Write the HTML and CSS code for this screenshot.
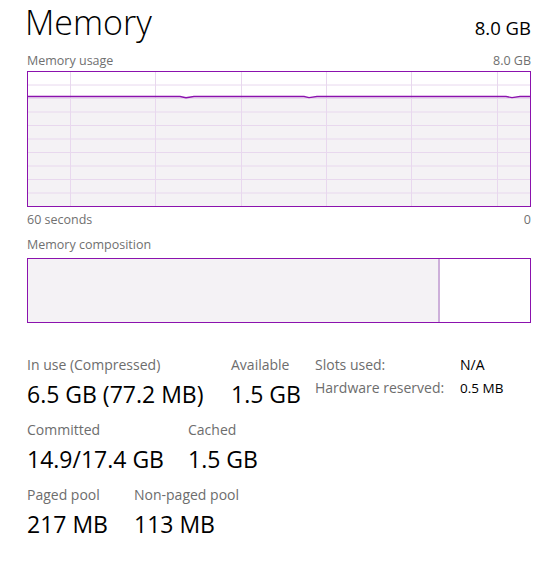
FILE: index.html
```html
<!DOCTYPE html>
<html lang="en">
<head>
    <meta charset="UTF-8">
    <meta name="viewport" content="width=device-width, initial-scale=1.0">
    <title>Memory</title>
    <link rel="stylesheet" href="styles.css">
</head>
<body>
    <div class="panel">
        <div class="header">
            <div class="title">Memory</div>
            <div class="total">8.0 GB</div>
        </div>
        <div class="caption-row caption-top">
            <span>Memory usage</span>
            <span>8.0 GB</span>
        </div>
        <div class="usage-graph">
            <svg width="502" height="134" viewBox="0 0 502 134">
                <rect x="0" y="25" width="502" height="109" fill="#f4f2f5"/>
                <g stroke="#e8d8ee" stroke-width="1">
                    <line x1="42.5" y1="0" x2="42.5" y2="134"/>
                    <line x1="127.5" y1="0" x2="127.5" y2="134"/>
                    <line x1="213.5" y1="0" x2="213.5" y2="134"/>
                    <line x1="298.5" y1="0" x2="298.5" y2="134"/>
                    <line x1="383.5" y1="0" x2="383.5" y2="134"/>
                    <line x1="469.5" y1="0" x2="469.5" y2="134"/>
                    <line x1="0" y1="13" x2="502" y2="13"/>
                    <line x1="0" y1="26.5" x2="502" y2="26.5"/>
                    <line x1="0" y1="40" x2="502" y2="40"/>
                    <line x1="0" y1="53.5" x2="502" y2="53.5"/>
                    <line x1="0" y1="67" x2="502" y2="67"/>
                    <line x1="0" y1="80.5" x2="502" y2="80.5"/>
                    <line x1="0" y1="94" x2="502" y2="94"/>
                    <line x1="0" y1="107.5" x2="502" y2="107.5"/>
                    <line x1="0" y1="121" x2="502" y2="121"/>
                </g>
                <polyline fill="none" stroke="#8b12ae" stroke-width="1.4"
                    points="0,24.5 152,24.5 158,25.8 166,24.5 276,24.5 281,25.6 289,24.5 478,24.5 484,25.6 492,24.5 502,24.5"/>
            </svg>
        </div>
        <div class="caption-row">
            <span>60 seconds</span>
            <span>0</span>
        </div>
        <div class="caption-row caption-comp">
            <span>Memory composition</span>
        </div>
        <div class="composition">
            <div class="comp-used"></div>
            <div class="comp-free"></div>
        </div>

        <div class="stats">
            <div class="stats-top">
                <div class="stat stat-inuse">
                    <div class="stat-label">In use (Compressed)</div>
                    <div class="stat-value">6.5 GB (77.2 MB)</div>
                </div>
                <div class="stat stat-available">
                    <div class="stat-label">Available</div>
                    <div class="stat-value">1.5 GB</div>
                </div>
                <div class="side">
                    <div class="side-label">Slots used:</div>
                    <div class="side-value">N/A</div>
                    <div class="side-label">Hardware reserved:</div>
                    <div class="side-value side-small">0.5 MB</div>
                </div>
            </div>
            <div class="stats-row">
                <div class="stat stat-committed">
                    <div class="stat-label">Committed</div>
                    <div class="stat-value">14.9/17.4 GB</div>
                </div>
                <div class="stat">
                    <div class="stat-label">Cached</div>
                    <div class="stat-value">1.5 GB</div>
                </div>
            </div>
            <div class="stats-row">
                <div class="stat stat-paged">
                    <div class="stat-label">Paged pool</div>
                    <div class="stat-value">217 MB</div>
                </div>
                <div class="stat">
                    <div class="stat-label">Non-paged pool</div>
                    <div class="stat-value">113 MB</div>
                </div>
            </div>
        </div>
    </div>
</body>
</html>
```

FILE: styles.css
```css
body {
    margin: 0;
    background-color: #ffffff;
    font-family: "Open Sans", "Noto Sans", sans-serif;
    color: #000000;
}
.panel {
    padding: 0 25px 0 27px;
    width: 504px;
}
.header {
    display: flex;
    justify-content: space-between;
    align-items: baseline;
    padding-top: 2px;
}
.title {
    font-size: 34px;
    font-weight: 300;
    line-height: 40px;
    margin-left: -2px;
}
.total {
    font-size: 18.5px;
    line-height: 24px;
}
.caption-row {
    display: flex;
    justify-content: space-between;
    font-size: 12.5px;
    line-height: 16px;
    color: #707070;
}
.caption-top {
    margin-top: 11px;
    margin-bottom: 2px;
}
.caption-comp {
    margin-top: 9px;
    margin-bottom: 5px;
}
.usage-graph {
    border: 1px solid #8b12ae;
    height: 134px;
    margin-bottom: 5px;
}
.usage-graph svg {
    display: block;
}
.composition {
    display: flex;
    border: 1px solid #8b12ae;
    height: 63px;
}
.comp-used {
    width: 410px;
    background-color: #f4f2f5;
    border-right: 2px solid #cdb0da;
}
.comp-free {
    flex: 1;
}
.stats {
    margin-top: 32px;
}
.stats-top, .stats-row {
    display: flex;
}
.stats-row {
    margin-top: 11px;
}
.stat-label {
    font-size: 14px;
    line-height: 20px;
    color: #6d6d6d;
}
.stat-value {
    font-size: 23px;
    line-height: 30px;
    margin-top: 4px;
}
.stat-inuse { width: 204px; }
.stat-available { width: 84px; }
.stat-committed { width: 161px; }
.stat-paged { width: 107px; }
.side {
    display: grid;
    grid-template-columns: 145px auto;
    row-gap: 3px;
    align-content: start;
}
.side-label {
    font-size: 14px;
    line-height: 20px;
    color: #6d6d6d;
}
.side-value {
    font-size: 14px;
    line-height: 20px;
}
.side-small {
    font-size: 13.5px;
}
```
